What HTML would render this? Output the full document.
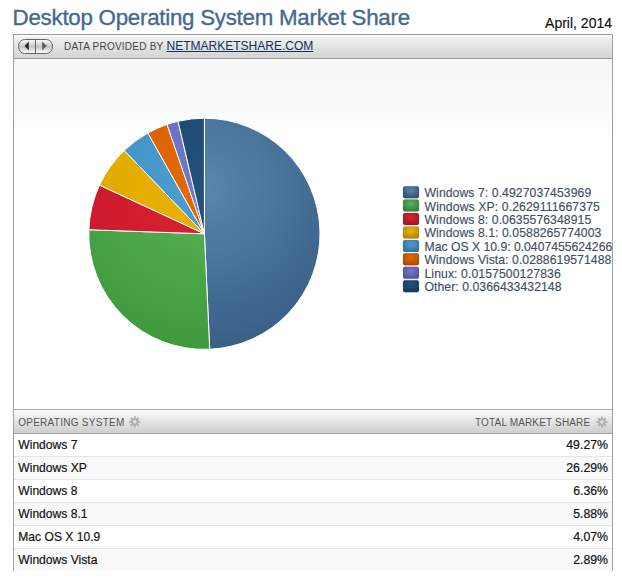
<!DOCTYPE html>
<html><head><meta charset="utf-8">
<style>
html,body{margin:0;padding:0;background:#fff;width:622px;height:578px;overflow:hidden;position:relative;font-family:"Liberation Sans",sans-serif;}
.abs{position:absolute;white-space:nowrap;}
#title{left:12.6px;top:3px;font-size:22.3px;letter-spacing:-0.25px;line-height:30px;color:#44698f;-webkit-text-stroke:0.35px #44698f;}
#date{right:10px;top:13px;font-size:14px;line-height:20px;color:#111;-webkit-text-stroke:0.15px #111;}
#box{left:13px;top:34px;width:598px;height:536px;border-left:1px solid #a0a0a0;border-right:1px solid #a0a0a0;border-top:1px solid #9c9c9c;}
#tb{left:0;top:0;width:598px;height:23px;border-bottom:1px solid #9c9c9c;background:linear-gradient(#fdfdfd 0,#fdfdfd 1px,#f1f1f1 2px,#d3d3d3 100%);}
#chart{left:0;top:24px;width:598px;height:350px;background:linear-gradient(#f7f7f7,#fafafa 40px,#fff 80px);}
#hdr{left:0;top:374px;width:598px;height:23px;border-top:1px solid #a6a6a6;border-bottom:1px solid #a3a3a3;background:linear-gradient(#fbfbfb,#e4e4e4 50%,#cdcdcd);}
.row{position:absolute;left:0;width:598px;height:22px;border-bottom:1px solid #e4e4e4;background:#fff;}
.row.alt{background:#f9f9f9;}
.row .n{position:absolute;left:4.3px;top:4px;font-size:12.1px;line-height:14px;color:#141414;-webkit-text-stroke:0.2px #141414;}
.row .p{position:absolute;right:4px;top:4px;font-size:12.3px;line-height:14px;color:#141414;-webkit-text-stroke:0.2px #141414;}
</style></head><body>
<div id="title" class="abs">Desktop Operating System Market Share</div>
<div id="date" class="abs">April, 2014</div>
<div id="box" class="abs">
  <div id="tb" class="abs">
    <div class="abs" style="left:50px;top:6px;font-size:10px;letter-spacing:0.23px;line-height:12px;color:#444;">DATA PROVIDED BY</div><div class="abs" style="left:152.6px;top:4px;font-size:12px;line-height:14px;color:#13305e;text-decoration:underline;">NETMARKETSHARE.COM</div>
  </div>
  <div id="chart" class="abs"></div>
  <div id="hdr" class="abs">
    <div class="abs" style="left:4.2px;top:6.5px;font-size:10px;letter-spacing:0.27px;line-height:12px;color:#555;">OPERATING SYSTEM</div>
    <div class="abs" style="right:21.7px;top:6.5px;font-size:10px;letter-spacing:0.16px;line-height:12px;color:#555;">TOTAL MARKET SHARE</div>
  </div>
  <div class="row" style="top:399px"><span class="n">Windows 7</span><span class="p">49.27%</span></div><div class="row alt" style="top:422px"><span class="n">Windows XP</span><span class="p">26.29%</span></div><div class="row" style="top:445px"><span class="n">Windows 8</span><span class="p">6.36%</span></div><div class="row alt" style="top:468px"><span class="n">Windows 8.1</span><span class="p">5.88%</span></div><div class="row" style="top:491px"><span class="n">Mac OS X 10.9</span><span class="p">4.07%</span></div><div class="row alt" style="top:514px;border-bottom:none;height:22px"><span class="n">Windows Vista</span><span class="p">2.89%</span></div>
</div>
<svg class="abs" style="left:0;top:0" width="622" height="578" viewBox="0 0 622 578">
  <defs>
    <radialGradient id="g0" gradientUnits="userSpaceOnUse" cx="204.4" cy="188" r="161"><stop offset="0" stop-color="#5886ad"/><stop offset="1" stop-color="#395f86"/></radialGradient><radialGradient id="s0" cx=".5" cy=".35" r=".75"><stop offset="0" stop-color="#5886ad"/><stop offset="1" stop-color="#2c4a68"/></radialGradient><radialGradient id="g1" gradientUnits="userSpaceOnUse" cx="204.4" cy="188" r="161"><stop offset="0" stop-color="#58b456"/><stop offset="1" stop-color="#3f9a3e"/></radialGradient><radialGradient id="s1" cx=".5" cy=".35" r=".75"><stop offset="0" stop-color="#58b456"/><stop offset="1" stop-color="#317830"/></radialGradient><radialGradient id="g2" gradientUnits="userSpaceOnUse" cx="204.4" cy="188" r="161"><stop offset="0" stop-color="#dc2232"/><stop offset="1" stop-color="#c5192a"/></radialGradient><radialGradient id="s2" cx=".5" cy=".35" r=".75"><stop offset="0" stop-color="#dc2232"/><stop offset="1" stop-color="#991320"/></radialGradient><radialGradient id="g3" gradientUnits="userSpaceOnUse" cx="204.4" cy="188" r="161"><stop offset="0" stop-color="#eab300"/><stop offset="1" stop-color="#dca600"/></radialGradient><radialGradient id="s3" cx=".5" cy=".35" r=".75"><stop offset="0" stop-color="#eab300"/><stop offset="1" stop-color="#ab8100"/></radialGradient><radialGradient id="g4" gradientUnits="userSpaceOnUse" cx="204.4" cy="188" r="161"><stop offset="0" stop-color="#4b9dd2"/><stop offset="1" stop-color="#3f8fc4"/></radialGradient><radialGradient id="s4" cx=".5" cy=".35" r=".75"><stop offset="0" stop-color="#4b9dd2"/><stop offset="1" stop-color="#316f98"/></radialGradient><radialGradient id="g5" gradientUnits="userSpaceOnUse" cx="204.4" cy="188" r="161"><stop offset="0" stop-color="#e36a05"/><stop offset="1" stop-color="#d45c00"/></radialGradient><radialGradient id="s5" cx=".5" cy=".35" r=".75"><stop offset="0" stop-color="#e36a05"/><stop offset="1" stop-color="#a54700"/></radialGradient><radialGradient id="g6" gradientUnits="userSpaceOnUse" cx="204.4" cy="188" r="161"><stop offset="0" stop-color="#7478c8"/><stop offset="1" stop-color="#6468bc"/></radialGradient><radialGradient id="s6" cx=".5" cy=".35" r=".75"><stop offset="0" stop-color="#7478c8"/><stop offset="1" stop-color="#4e5192"/></radialGradient><radialGradient id="g7" gradientUnits="userSpaceOnUse" cx="204.4" cy="188" r="161"><stop offset="0" stop-color="#24507c"/><stop offset="1" stop-color="#1b446c"/></radialGradient><radialGradient id="s7" cx=".5" cy=".35" r=".75"><stop offset="0" stop-color="#24507c"/><stop offset="1" stop-color="#153554"/></radialGradient>
    <linearGradient id="btn" x1="0" y1="0" x2="0" y2="1"><stop offset="0" stop-color="#fff"/><stop offset=".5" stop-color="#c6c6c6"/><stop offset="1" stop-color="#fff"/></linearGradient>
  </defs>
  <g>
    <rect x="18.5" y="39.5" width="34" height="14" rx="6" ry="7" fill="url(#btn)" stroke="#666" stroke-width="1"/>
    <line x1="35.5" y1="39.5" x2="35.5" y2="53.5" stroke="#666" stroke-width="1"/>
    <path d="M24.6 46L28.8 41.5L28.8 50.6Z" fill="#2a2a2a"/>
    <path d="M42.2 41.5L46.6 46L42.2 50.6Z" fill="#5c5c5c"/>
  </g>
  <g stroke="#b0b0b0" fill="none"><circle cx="134.8" cy="421.8" r="2.7" stroke-width="1.8"/><line x1="137.80" y1="421.80" x2="140.30" y2="421.80" stroke-width="2"/><line x1="136.92" y1="423.92" x2="138.69" y2="425.69" stroke-width="2"/><line x1="134.80" y1="424.80" x2="134.80" y2="427.30" stroke-width="2"/><line x1="132.68" y1="423.92" x2="130.91" y2="425.69" stroke-width="2"/><line x1="131.80" y1="421.80" x2="129.30" y2="421.80" stroke-width="2"/><line x1="132.68" y1="419.68" x2="130.91" y2="417.91" stroke-width="2"/><line x1="134.80" y1="418.80" x2="134.80" y2="416.30" stroke-width="2"/><line x1="136.92" y1="419.68" x2="138.69" y2="417.91" stroke-width="2"/></g>
  <g stroke="#b0b0b0" fill="none"><circle cx="601.9" cy="422.1" r="2.7" stroke-width="1.8"/><line x1="604.90" y1="422.10" x2="607.40" y2="422.10" stroke-width="2"/><line x1="604.02" y1="424.22" x2="605.79" y2="425.99" stroke-width="2"/><line x1="601.90" y1="425.10" x2="601.90" y2="427.60" stroke-width="2"/><line x1="599.78" y1="424.22" x2="598.01" y2="425.99" stroke-width="2"/><line x1="598.90" y1="422.10" x2="596.40" y2="422.10" stroke-width="2"/><line x1="599.78" y1="419.98" x2="598.01" y2="418.21" stroke-width="2"/><line x1="601.90" y1="419.10" x2="601.90" y2="416.60" stroke-width="2"/><line x1="604.02" y1="419.98" x2="605.79" y2="418.21" stroke-width="2"/></g>
  <g stroke="#fff" stroke-width="1" stroke-linejoin="round">
    <path fill="url(#g0)" d="M204.4 233.8L204.40 118.20A115.6 115.6 0 0 1 209.70 349.28Z"/><path fill="url(#g1)" d="M204.4 233.8L209.70 349.28A115.6 115.6 0 0 1 88.87 229.72Z"/><path fill="url(#g2)" d="M204.4 233.8L88.87 229.72A115.6 115.6 0 0 1 99.55 185.12Z"/><path fill="url(#g3)" d="M204.4 233.8L99.55 185.12A115.6 115.6 0 0 1 124.21 150.53Z"/><path fill="url(#g4)" d="M204.4 233.8L124.21 150.53A115.6 115.6 0 0 1 147.91 132.94Z"/><path fill="url(#g5)" d="M204.4 233.8L147.91 132.94A115.6 115.6 0 0 1 167.03 124.41Z"/><path fill="url(#g6)" d="M204.4 233.8L167.03 124.41A115.6 115.6 0 0 1 178.02 121.25Z"/><path fill="url(#g7)" d="M204.4 233.8L178.02 121.25A115.6 115.6 0 0 1 204.40 118.20Z"/>
  </g>
  <g font-family="Liberation Sans" font-size="12.2" fill="#3e4f63" stroke="#3e4f63" stroke-width="0.15">
    <rect x="403" y="186.2" width="16" height="12" rx="2" fill="url(#s0)"/><text x="424.5" y="197.1" textLength="166.66" lengthAdjust="spacing">Windows 7: 0.4927037453969</text><rect x="403" y="199.6" width="16" height="12" rx="2" fill="url(#s1)"/><text x="424.5" y="210.5" textLength="175.33" lengthAdjust="spacing">Windows XP: 0.2629111667375</text><rect x="403" y="213.1" width="16" height="12" rx="2" fill="url(#s2)"/><text x="424.5" y="224.0" textLength="166.66" lengthAdjust="spacing">Windows 8: 0.0635576348915</text><rect x="403" y="226.5" width="16" height="12" rx="2" fill="url(#s3)"/><text x="424.5" y="237.4" textLength="176.83" lengthAdjust="spacing">Windows 8.1: 0.0588265774003</text><rect x="403" y="239.9" width="16" height="12" rx="2" fill="url(#s4)"/><text x="424.5" y="250.8" textLength="187.70" lengthAdjust="spacing">Mac OS X 10.9: 0.0407455624266</text><rect x="403" y="253.3" width="16" height="12" rx="2" fill="url(#s5)"/><text x="424.5" y="264.2" textLength="186.77" lengthAdjust="spacing">Windows Vista: 0.0288619571488</text><rect x="403" y="266.8" width="16" height="12" rx="2" fill="url(#s6)"/><text x="424.5" y="277.7" textLength="136.19" lengthAdjust="spacing">Linux: 0.0157500127836</text><rect x="403" y="280.2" width="16" height="12" rx="2" fill="url(#s7)"/><text x="424.5" y="291.1" textLength="136.95" lengthAdjust="spacing">Other: 0.0366433432148</text>
  </g>
</svg>
</body></html>
